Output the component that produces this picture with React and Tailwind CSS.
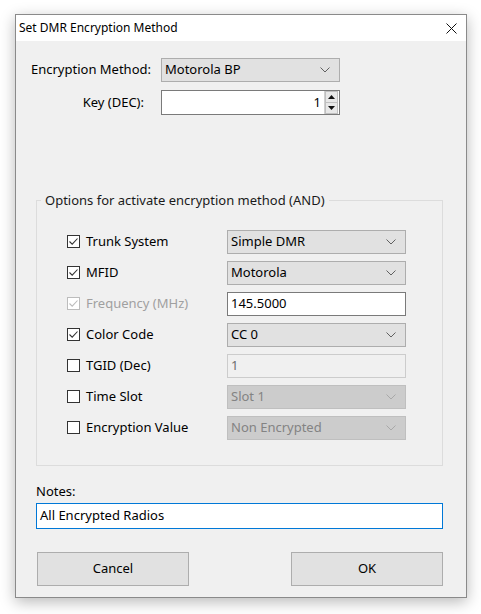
import React from 'react';

const font = { fontFamily: '"Noto Sans", "Liberation Sans", sans-serif' };

const Chevron = ({ disabled }) => (
  <svg width="10" height="6" viewBox="0 0 10 6" className="shrink-0">
    <path d="M0.5 0.5 L5 5 L9.5 0.5" fill="none" stroke={disabled ? '#a8a8a8' : '#606060'} strokeWidth="1" />
  </svg>
);

const Combo = ({ value, disabled, className = '' }) => (
  <div
    className={`flex items-center justify-between h-[24px] pl-[3px] pr-[9px] border ${
      disabled ? 'bg-[#cccccc] border-[#bfbfbf] text-[#838383]' : 'bg-[#e1e1e1] border-[#adadad] text-black'
    } ${className}`}
  >
    <span>{value}</span>
    <Chevron disabled={disabled} />
  </div>
);

const Check = ({ checked, disabled }) => (
  <div
    className={`w-[13px] h-[13px] border flex items-center justify-center bg-white shrink-0 ${
      disabled ? 'border-[#bcbcbc]' : 'border-[#333333]'
    }`}
  >
    {checked && (
      <svg width="11" height="11" viewBox="0 0 11 11">
        <path d="M1.5 5.5 L4.2 8.2 L9.5 2.5" fill="none" stroke={disabled ? '#bcbcbc' : '#333333'} strokeWidth="1.1" />
      </svg>
    )}
  </div>
);

const rows = [
  { label: 'Trunk System', checked: true, field: <Combo value="Simple DMR" /> },
  { label: 'MFID', checked: true, field: <Combo value="Motorola" /> },
  {
    label: 'Frequency (MHz)',
    checked: true,
    disabled: true,
    field: (
      <div className="h-[24px] bg-white border border-[#7a7a7a] flex items-center pl-[3px]">145.5000</div>
    ),
  },
  { label: 'Color Code', checked: true, field: <Combo value="CC 0" /> },
  {
    label: 'TGID (Dec)',
    checked: false,
    field: (
      <div className="h-[24px] bg-[#f0f0f0] border border-[#cccccc] flex items-center pl-[3px] text-[#6d6d6d]">1</div>
    ),
  },
  { label: 'Time Slot', checked: false, field: <Combo value="Slot 1" disabled /> },
  { label: 'Encryption Value', checked: false, field: <Combo value="Non Encrypted" disabled /> },
];

export default function App() {
  return (
    <div className="w-[481px] h-[614px] bg-white pt-[14px] pl-[15px] text-[13px] text-black" style={font}>
      <div className="w-[452px] h-[584px] border border-[#8a8a8a] bg-[#f0f0f0] shadow-[0_4px_14px_rgba(0,0,0,0.28)] flex flex-col">
        <div className="h-[26px] bg-white flex items-center justify-between pl-[3px] pr-[9px] text-[12px]">
          <span>Set DMR Encryption Method</span>
          <svg width="11" height="11" viewBox="0 0 11 11">
            <path d="M0.5 0.5 L10.5 10.5 M10.5 0.5 L0.5 10.5" stroke="#111" strokeWidth="1" />
          </svg>
        </div>

        <div className="flex-1 flex flex-col pl-[20px] pr-[23px]">
          <div className="mt-[17px] grid grid-cols-[115px_179px] gap-x-[10px] gap-y-[8px] items-center">
            <div className="flex justify-end whitespace-nowrap">Encryption Method:</div>
            <Combo value="Motorola BP" />
            <div className="flex justify-end whitespace-nowrap pr-[7px]">Key (DEC):</div>
            <div className="h-[25px] bg-white border border-[#7a7a7a] flex items-center justify-end">
              <span className="pr-[3px]">1</span>
              <div className="flex flex-col h-full border-l border-[#d0d0d0] w-[14px] mr-[1px]">
                <div className="flex-1 bg-[#e8e8e8] border border-[#c0c0c0] flex items-center justify-center">
                  <svg width="7" height="4" viewBox="0 0 7 4"><path d="M0 4 L3.5 0 L7 4 Z" fill="#111" /></svg>
                </div>
                <div className="flex-1 bg-[#e8e8e8] border border-[#c0c0c0] border-t-0 flex items-center justify-center">
                  <svg width="7" height="4" viewBox="0 0 7 4"><path d="M0 0 L3.5 4 L7 0 Z" fill="#111" /></svg>
                </div>
              </div>
            </div>
          </div>

          <fieldset className="mt-[76px] h-[275px] border border-[#dcdcdc] px-0 pt-[19px]">
            <legend className="ml-[4px] px-[4px] text-[#1a1a1a]">Options for activate encryption method (AND)</legend>
            <div className="flex flex-col gap-[7px] pl-[30px] pr-[36px]">
              {rows.map((r) => (
                <div key={r.label} className="flex items-center h-[24px]">
                  <div className="w-[160px] flex items-center gap-[6px]">
                    <Check checked={r.checked} disabled={r.disabled} />
                    <span className={r.disabled ? 'text-[#a0a0a0]' : ''}>{r.label}</span>
                  </div>
                  <div className="flex-1">{r.field}</div>
                </div>
              ))}
            </div>
          </fieldset>

          <div className="mt-[16px]">Notes:</div>
          <div className="mt-[1px] h-[26px] bg-white border border-[#0078d7] flex items-center pl-[3px]">
            All Encrypted Radios
          </div>

          <div className="mt-[23px] flex justify-between pl-[1px]">
            <button className="w-[152px] h-[34px] bg-[#e1e1e1] border border-[#adadad]">Cancel</button>
            <button className="w-[152px] h-[34px] bg-[#e1e1e1] border border-[#adadad]">OK</button>
          </div>
        </div>
      </div>
    </div>
  );
}
